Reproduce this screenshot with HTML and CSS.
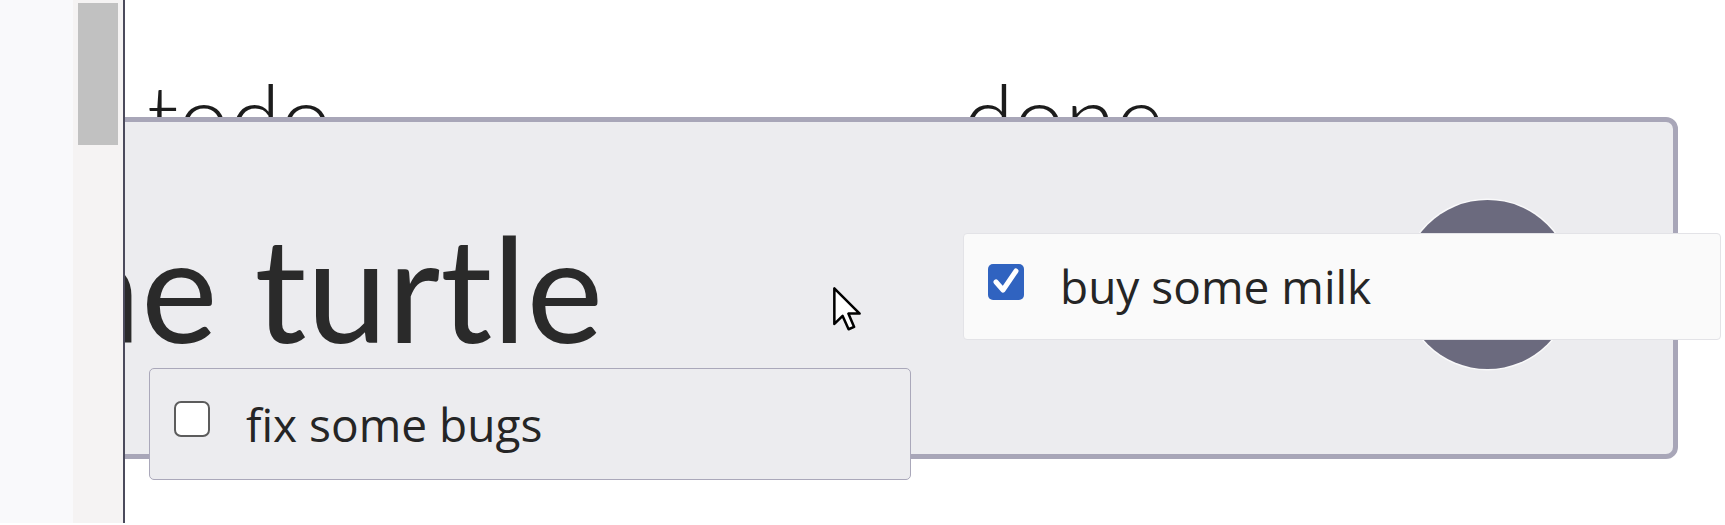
FILE: index.html
```html
<!DOCTYPE html>
<html lang="en">
<head>
<meta charset="utf-8">
<title>Board</title>
<link rel="stylesheet" href="styles.css">
</head>
<body>
<div class="screen">
  <aside class="sidebar">
    <div class="gutter"></div>
    <div class="track"><div class="thumb"></div></div>
  </aside>
  <main class="board">
    <section class="column">
      <h2 class="column-title column-title--todo">todo</h2>
      <label class="card card--todo">
        <span class="checkbox"></span>
        <span class="card-text">fix some bugs</span>
      </label>
    </section>
    <section class="column">
      <h2 class="column-title">done</h2>
      <label class="card card--done">
        <span class="checkbox checkbox--checked">
          <svg viewBox="0 0 36 36" width="36" height="36" aria-hidden="true"><polyline points="8,18 15,26 28,7" fill="none" stroke="#ffffff" stroke-width="5" stroke-linecap="round" stroke-linejoin="round"/></svg>
        </span>
        <span class="card-text">buy some milk</span>
      </label>
    </section>
    <div class="overlay-panel">
      <h1 class="panel-title">the turtle</h1>
      <div class="avatar"></div>
    </div>
    <svg class="cursor" viewBox="0 0 13 20" width="30" height="46" aria-hidden="true"><path d="M1 1 L1 16.5 L4.6 13 L7.2 18.8 L9.6 17.8 L7.1 12 L12 12 Z" fill="#ffffff" stroke="#000000" stroke-width="1.1" stroke-linejoin="round"/></svg>
  </main>
</div>
</body>
</html>
```

FILE: styles.css
```css
* { box-sizing: border-box; }

html, body {
  margin: 0;
  padding: 0;
  background: #ffffff;
  font-family: Lato, "Open Sans", sans-serif;
  color: #262626;
  font-variant-ligatures: none;
}

.screen {
  display: flex;
  width: 1725px;
  height: 525px;
  overflow: hidden;
}

.sidebar {
  position: relative;
  z-index: 3;
  display: flex;
  width: 125px;
  height: 523px;
  border-right: 2px solid #4b4a5c;
  flex: none;
}

.gutter {
  width: 73px;
  background: #f9f9fb;
}

.track {
  flex: 1;
  background: #f5f3f3;
  padding: 3px 5px 0 5px;
}

.thumb {
  height: 142px;
  background: #c1c1c1;
}

.board {
  position: relative;
  flex: 1;
  display: grid;
  grid-template-columns: 762px 758px;
  column-gap: 52px;
  align-items: start;
  padding: 62px 0 0 24px;
}

.column {
  display: flex;
  flex-direction: column;
}

.column-title {
  margin: 0;
  font-size: 92px;
  font-weight: 300;
  line-height: 1.2;
  color: #1c1c1c;
}

.column-title--todo {
  margin-left: -2px;
}

.card {
  position: relative;
  z-index: 2;
  display: flex;
  align-items: center;
  gap: 36px;
  padding-left: 24px;
  font-family: "Open Sans", Lato, sans-serif;
  font-size: 46px;
  line-height: 1.2;
  color: #252525;
}

.card--todo {
  height: 112px;
  margin-top: 196px;
  background: #ececef;
  border: 1.5px solid #aaa8ba;
  border-radius: 5px;
}

.card--done {
  height: 107px;
  margin-top: 61px;
  background: #fafafa;
  border: 1px solid #e3e3e7;
  border-radius: 4px;
}

.checkbox {
  display: block;
  flex: none;
  width: 36px;
  height: 36px;
  margin-bottom: 10px;
  background: #ffffff;
  border: 2px solid #5c5c5c;
  border-radius: 7px;
}

.checkbox--checked {
  background: #3063c0;
  border: none;
  border-radius: 5px;
}

.checkbox--checked svg {
  display: block;
}

.overlay-panel {
  position: absolute;
  z-index: 1;
  top: 117px;
  left: -165px;
  right: 47px;
  height: 342px;
  display: flex;
  align-items: center;
  justify-content: space-between;
  padding: 0 101px 0 43px;
  background: #ececef;
  border: 5px solid #a8a6b8;
  border-radius: 12px;
}

.panel-title {
  margin: 0 0 2px 0;
  font-size: 145px;
  font-weight: 400;
  line-height: 1.2;
  color: #2a2a2a;
  white-space: nowrap;
}

.avatar {
  flex: none;
  width: 169px;
  height: 169px;
  margin-bottom: 7px;
  border-radius: 50%;
  background: #6b6a7e;
  box-shadow: 0 0 0 1.5px rgba(255, 255, 255, 0.7);
}

.cursor {
  position: absolute;
  z-index: 5;
  left: 707px;
  top: 286px;
}
```
